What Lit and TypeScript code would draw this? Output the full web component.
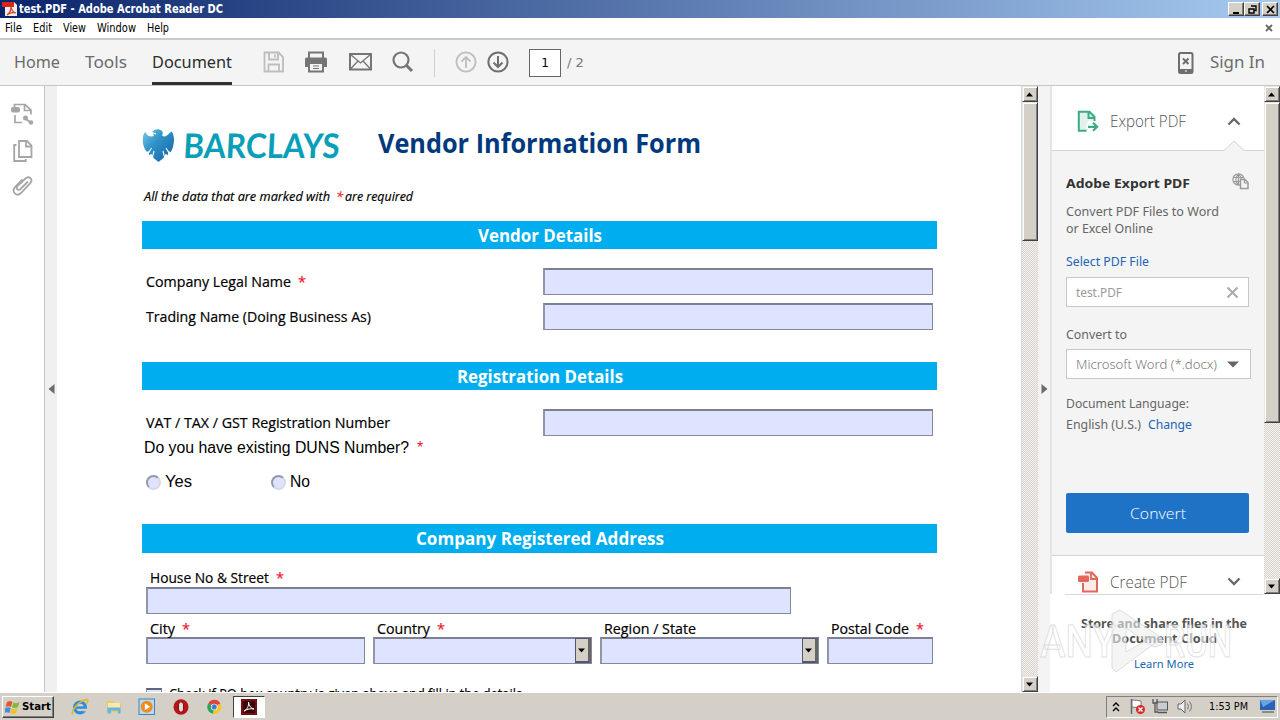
import { LitElement, html, css, svg, nothing } from "lit";
import { customElement, property } from "lit/decorators.js";

/** Text run stretched horizontally to a fixed advance width. */
@customElement("fit-text")
class FitText extends LitElement {
  @property({ type: Number }) w = 0;
  static styles = css`
    :host { display: inline-block; white-space: pre; flex: none; text-align: left; }
    .run { display: inline-block; transform-origin: 0 50%; }
  `;
  firstUpdated() {
    const run = this.renderRoot.querySelector(".run") as HTMLElement;
    const natural = run.getBoundingClientRect().width;
    this.style.width = `${this.w}px`;
    if (natural > 0) run.style.transform = `scaleX(${this.w / natural})`;
  }
  render() {
    return html`<span class="run"><slot></slot></span>`;
  }
}

@customElement("scroll-bar")
class ScrollBar extends LitElement {
  @property({ type: Number }) thumb = 100;
  static styles = css`
    :host { display: flex; flex-direction: column; width: 16px; flex: none;
      background: repeating-conic-gradient(#d8d3cc 0 25%, #f4f1ee 0 50%) 0 0 / 2px 2px; }
    .btn, .thumb { box-sizing: border-box; background: #d4d0c8; border: 1px solid; flex: none;
      border-color: #e8e6e0 #404040 #404040 #e8e6e0; box-shadow: inset 1px 1px #fff, inset -1px -1px #808080; }
    .btn { height: 16px; display: flex; align-items: center; justify-content: center; }
    .grow { flex: 1; }
  `;
  render() {
    return html`
      <div class="btn"><svg width="8" height="5"><path d="M0 4.500h7L3.500 .5z" fill="#000" /></svg></div>
      <div class="thumb" style="height:${this.thumb}px"></div>
      <div class="grow"></div>
      <div class="btn"><svg width="8" height="5"><path d="M0 .5h7L3.500 4.500z" fill="#000" /></svg></div>`;
  }
}

const ic = (w: number, h: number, body: unknown) =>
  html`<svg width=${w} height=${h} viewBox="0 0 ${w} ${h}" fill="none">${body}</svg>`;

const saveIcon = ic(22, 22, svg`<g stroke="#bdbdbd" stroke-width="1.800"><path d="M1.500 1.500h14l4.500 4.500v14.500h-18.500z"/><path d="M6 1.500v7h9v-7M5.500 20.500v-7h10.500v7"/><path d="M12 3.500v3"/></g>`);
const printIcon = ic(22, 22, svg`<path d="M4 7V1.500h14V7" stroke="#757575" stroke-width="2"/><path d="M1.500 6.500h19q1.500 0 1.500 1.500v8h-4v-4H4v4H0V8q0-1.500 1.500-1.500z" fill="#757575"/><path d="M4 12v8.500h14V12z" stroke="#757575" stroke-width="2" fill="#f4f4f4"/><path d="M8 15h6M8 17.500h6" stroke="#757575"/>`);
const mailIcon = ic(23, 18, svg`<g stroke="#757575"><path d="M1 1h21v15.500H1z" stroke-width="2"/><path d="M1.500 1.500l10 8.500 10-8.500M1.500 16l7.500-8M21.500 16l-7.500-8" stroke-width="1.300"/></g>`);
const findIcon = ic(22, 22, svg`<circle cx="9" cy="9" r="7.500" stroke="#757575" stroke-width="2.200"/><path d="M14.500 14.500l5.500 5.500" stroke="#757575" stroke-width="3"/>`);
const upIcon = ic(22, 22, svg`<g stroke="#c0c0c0" stroke-width="1.900"><circle cx="11" cy="11" r="9.600"/><path d="M11 17V6M6.500 10.500L11 6l4.500 4.500"/></g>`);
const downIcon = ic(22, 22, svg`<g stroke="#707070" stroke-width="2"><circle cx="11" cy="11" r="9.600"/><path d="M11 5v11M6.500 11.500L11 16l4.500-4.500"/></g>`);
const deviceIcon = ic(16, 22, svg`<rect x="1" y="1" width="13.500" height="20" rx="1.500" stroke="#6e6e6e" stroke-width="2"/><path d="M1 17h13.500v4H1z" fill="#6e6e6e"/><path d="M5 6.500l5.500 5.500M10.500 6.500L5 12" stroke="#6e6e6e" stroke-width="2"/><path d="M7 19h2" stroke="#fff"/>`);
const paneIcon = ic(24, 24, svg`<g stroke="#a6a6a6" stroke-width="1.700"><path d="M4 13v7.500h7M3.500 5V2.500H14l6 5.500v4.500M13.500 2.500V8.500h6"/></g><rect x="0" y="5" width="9" height="5.500" rx="2" fill="#a6a6a6"/><path d="M14 16l6 5" stroke="#a6a6a6" stroke-width="2"/><circle cx="14.500" cy="16" r="2.500" fill="#a6a6a6"/><circle cx="20" cy="20.500" r="2.200" fill="#a6a6a6"/>`);
const pagesIcon = ic(20, 24, svg`<g stroke="#a6a6a6" stroke-width="1.800"><path d="M6 2h8l4.500 4.500V18H6z"/><path d="M13 2v5.500h5.500M3.500 6H1.200v16h11.500v-2"/></g>`);
const clipIcon = ic(22, 24, svg`<path d="M16.500 7l-7.500 7.500c-2.500 2.500-5-.5-3-2.800L14 4c3.500-3.200 8 1 4.800 4.600L9.500 18.500c-4.500 4.200-10-1-6-6L11 4.800" stroke="#a6a6a6" stroke-width="1.800" transform="translate(-.5 -.5)"/>`);
const exportIcon = ic(22, 23, svg`<path d="M2 2h11l4 4.500v4L11 11l-2 6 2 3H2z" fill="#e3f1eb"/><path d="M17.500 11V7L12.500 1.800H1.800v19H9.500M11.500 2v6h6" stroke="#3dab83" stroke-width="2"/><path d="M11 16.800h8M16 12.800l4.200 4-4.200 4" stroke="#3dab83" stroke-width="2.200"/>`);
const createIcon = ic(21, 22, svg`<path d="M5 12v8.500h14V7l-5-5.500H7" stroke="#e2675b" stroke-width="2" fill="#fbecea"/><path d="M13 2v6h6" stroke="#e2675b" stroke-width="1.800"/><rect x="0" y="4.500" width="11" height="6.500" rx="1.500" fill="#e2675b"/>`);
const chevron = (d: string) => ic(14, 9, svg`<path d=${d} stroke="#6a6a6a" stroke-width="2.400"/>`);
const globeIcon = ic(17, 17, svg`<g stroke="#9a9a9a" stroke-width="1.200"><circle cx="6.500" cy="6.500" r="5.600"/><path d="M1 4.500h11M1 8.500h7M6.500 1v11M6.500 1C3 4 3 9 6.500 12M6.500 1C10 4 9 5 9 6"/><path d="M8.500 6.500h4.500l3 3v6H8.500z" fill="#f4f4f4" stroke-width="1.500"/><path d="M12.500 6.500V10H16"/></g>`);

const eagle = html`<svg class="eagle" width="34" height="36" viewBox="0 0 34 36">
  <defs><linearGradient id="eg" x1="0" y1="0" x2="1" y2="1"><stop offset="0" stop-color="#7cc9e6"/><stop offset=".4" stop-color="#2f93c8"/><stop offset="1" stop-color="#1560a6"/></linearGradient></defs>
  <path fill="url(#eg)" d="M10 4c2-3 7-4 10-1 1 1 1 3 0 5l3 .5c3-1 4-3.500 6.500-5 2 2 2.700 6 2.500 9-.3 5-1.500 9-3.500 12l-2-2-.5 4.500-2.500-1-2 4-5 4-5-4-2-4-2.500 1-.5-4.500L5 24C2 21 .5 16 .8 11c0-3 .5-5 2.500-7 1 3 4 4.500 6 4.500l2.500-.5-.5-2z"/>
  <g stroke="#fff" stroke-width="1.100" fill="none"><path d="M6.500 25l3-5M10.500 29l1.500-6M22.500 29l-1.500-6M27 25l-3-5M10 4.500l4 1.500"/></g></svg>`;

const winFlag = html`<svg width="16" height="16" viewBox="0 0 16 16"><path d="M2 3q3-2 5.500 0L6 8Q3.500 6.500.5 8z" fill="#e4572c"/><path d="M8.500 3.500q3 1.500 6-.5L13 8q-3 1.800-6 .3z" fill="#7dba38"/><path d="M.2 9q3-1.500 5.500 0L4.500 14q-2.500-1.500-5 0z" fill="#3f8fdc"/><path d="M6.700 9.400q3 1.500 6-.4L11.200 14q-3 1.800-6 .3z" fill="#f3c02c"/></svg>`;

const launchers = [
  html`<svg width="18" height="18" viewBox="0 0 18 18"><circle cx="9" cy="9.500" r="5.400" fill="none" stroke="#2d8fdb" stroke-width="3.200"/><path d="M5 9.600h9.500" stroke="#2d8fdb" stroke-width="2.400"/><path d="M11.500 10.800h6v2.400h-6z" fill="#d4d0c8"/><path d="M2 16.500C-1 13 9 2 16 1.500c2 .3 0 3.500-1 4.500" fill="none" stroke="#e3b42e" stroke-width="1.500"/></svg>`,
  html`<svg width="18" height="18" viewBox="0 0 18 18"><path d="M2 3h6l1 2h7v9H2z" fill="#ecc764"/><path d="M3 5h12v6H3z" fill="#f9e9a9"/><path d="M2.500 9.500h13v6h-2.500v-3H6v3H2.500z" fill="#63b5e5"/></svg>`,
  html`<svg width="18" height="18" viewBox="0 0 18 18"><rect x="1" y="1" width="15.500" height="15.500" fill="#b6dcf5" stroke="#3b86bd"/><circle cx="8.700" cy="8.700" r="6" fill="#f28a1c"/><path d="M6.800 5.300l5.400 3.400-5.400 3.500z" fill="#fff"/></svg>`,
  html`<svg width="18" height="18" viewBox="0 0 18 18"><ellipse cx="9" cy="9" rx="7.500" ry="7.800" fill="#b91519"/><ellipse cx="9" cy="9" rx="2.600" ry="5.200" fill="#e4dcd6" stroke="#7d0a0d"/></svg>`,
  html`<svg width="18" height="18" viewBox="0 0 18 18"><g transform="translate(1.300 1) scale(.88)"><path d="M9 9L2.200 5A7.800 7.800 0 0116 5.200z" fill="#e04436"/><path d="M9 9L2.200 5A7.800 7.800 0 008 16.800z" fill="#2fa556"/><path d="M9 9l7-3.800A7.800 7.800 0 018 16.800z" fill="#fbc52c"/><circle cx="9" cy="9" r="3.700" fill="#fff"/><circle cx="9" cy="9" r="2.900" fill="#3d7de0"/></g></svg>`,
];

const req = html`<b class="req">*</b>`;

@customElement("app-root")
class AppRoot extends LitElement {
  static styles = css`
    :host { display: flex; flex-direction: column; width: 1280px; height: 720px; overflow: hidden; position: relative;
      background: #fff; font-family: "Open Sans", sans-serif; color: #000; }
    * { box-sizing: border-box; }
    svg { display: block; flex: none; }

    .title { height: 18px; flex: none; display: flex; align-items: center; padding: 0 2px 0 2px;
      background: linear-gradient(90deg, #0a246a, #a6caf0); color: #fff; font: bold 11.500px/18px "DejaVu Sans", sans-serif; }
    .title .name { margin-left: 1px; }
    .wbtns { margin-left: auto; display: flex; }
    .wbtn { width: 16px; height: 14px; background: #d4d0c8; border: 1px solid; border-color: #fff #404040 #404040 #fff;
      box-shadow: inset -1px -1px #808080; display: flex; align-items: center; justify-content: center; }
    .wbtn.close { margin-left: 2px; }
    .menu { height: 20px; flex: none; display: flex; align-items: center; padding: 0 7px 0 5px; font: 11.500px/18px "DejaVu Sans", sans-serif; }
    .menu .x { margin-left: auto; }

    .tools { height: 48px; flex: none; display: flex; align-items: center; background: #f4f4f4; border-top: 2px solid #cacaca;
      border-bottom: 1px solid #c6c6c6; color: #6b6b6b; padding: 0 15px 0 14px; font: 16px/45px "Noto Sans", sans-serif; }
    .tab { height: 45px; margin-right: 25px; }
    .tab.on { color: #2c2c2c; border-bottom: 3px solid #333; margin-right: 31px; }
    .tools > svg { margin-bottom: 1px; }
    .sep { width: 1px; height: 28px; background: #cfcfcf; margin: 0 20px 0 20px; }
    .page { width: 32px; height: 28px; border: 1px solid #666; background: #fff; color: #000; font: 12px/26px "DejaVu Sans", sans-serif; text-align: center; margin: 0 6px 0 20px; }
    .total { font: 13px/44px "DejaVu Sans", sans-serif; color: #777; }
    .signin { margin-left: auto; display: flex; align-items: center; gap: 16px; }

    .main { flex: 1; min-height: 0; display: flex; }
    .rail { width: 45px; border-right: 1px solid #c4c4c4; display: flex; flex-direction: column; align-items: center; padding: 16px 0 0 1px; gap: 12.500px; }
    .fold { width: 12px; background: #f0f0f0; display: flex; align-items: center; justify-content: center; }
    .fold.r { width: 12px; background: #f4f4f4; }

    .doc { width: 965px; flex: none; padding: 0 84px 0 85px; overflow: hidden; display: flex; flex-direction: column; border-right: 1px solid #cfdde2; }
    .doc > * { flex: none; }
    .head { height: 98px; display: flex; padding-top: 41px; color: #003a7d; font: bold 26px/32px "Open Sans", sans-serif; }
    .eagle { margin-top: 1px; }
    .brand { margin: 0 37px 0 7px; font: bold 34px/36px Lato, sans-serif; color: #0a9fb9; transform: skewX(-3deg); }
    .note { height: 37px; padding-left: 2px; font: italic 500 13px/25px "Open Sans", sans-serif; -webkit-text-stroke: .2px; display: flex; }
    .req { color: #f0142c; font-weight: 400; margin-left: 7px; }
    .note .req { margin: 0 2px 0 6px; }
    .bar { height: 28px; background: #00aeef; color: #fff; display: flex; justify-content: center; font: bold 17.500px/29px "Open Sans", sans-serif; }
    .row { display: flex; justify-content: space-between; align-items: center; height: 27px; padding: 0 4px; margin-bottom: 8px; }
    .lbl { display: flex; font: 500 14.500px/22px "Open Sans", sans-serif; -webkit-text-stroke: .2px; }
    .field { height: 27px; background: #dee3ff; border: 1px solid #85889b; border-top: 2px solid #7d8093; border-left: 2px solid #9295a6; width: 390px; flex: none; display: flex; justify-content: flex-end; }
    .g1 { margin: 19px 0 24px; }
    .g2 { margin: 19px 0 0; height: 115px; }
    .g2 .row { margin-bottom: 1px; }
    .arial { font: 16px/22px "Liberation Sans", sans-serif; padding-left: 2px; display: flex; }
    .arial .req { margin-left: 8px; }
    .radios { display: flex; margin-top: 12px; padding-left: 4px; }
    .radios > label { width: 125px; display: flex; align-items: center; gap: 4px; font: 16px/22px "Liberation Sans", sans-serif; }
    .dot { width: 15px; height: 15px; border-radius: 50%; background: #dee3ff; border: 2px solid; border-color: #9497a8 #d8d8e4 #d8d8e4 #9497a8; }
    .addr { padding-left: 4px; }
    .bar.last { height: 29px; }
    .addr .lbl { height: 24px; padding-left: 4px; line-height: 30px; }
    .street { margin-top: 10px; }
    .cols { display: flex; gap: 8px; }
    .cols .c .lbl { height: 23px; line-height: 30px; }
    .drop { width: 16px; height: 25px; margin-top: -1px; background: #d4d0c8; border: 1px solid #fff; border-color: #55586a; border-right: 3px solid #666; border-bottom-width: 2px; display: flex; align-items: center; justify-content: center; }
    .check { display: flex; margin-top: 24px; gap: 7px; }
    .check .box { width: 16px; height: 16px; border: 1px solid #85889b; border-top: 2px solid #62667c; background: #dee3ff; }
    .check .lbl { padding: 0; margin-top: -5px; line-height: 22px; }

    .side { width: 214px; flex: none; display: flex; flex-direction: column; color: #666; border-left: 2px solid #e4e4e4; }
    .wrap { display: flex; flex-direction: column; flex: none; width: 230px; }
    .upper { display: flex; height: 508px; }
    .acc { display: flex; align-items: center; height: 65px; border-bottom: 1px solid #d4d4d4; padding: 6px 23px 0 25px; font: 300 15.500px/24px "Open Sans", sans-serif; color: #555; position: relative; flex: none; }
    .acc fit-text { margin: 0 auto 0 11px; }
    .notch { position: absolute; right: 19px; bottom: -2px; }
    .body { background: #f4f4f4; flex: 1; padding: 20px 14px 0 14px; font: 12px/17px "Noto Sans", sans-serif; display: flex; flex-direction: column; }
    .body > * { flex: none; }
    .hd { display: flex; justify-content: space-between; font-weight: 700; font-size: 13px; line-height: 24px; color: #333; height: 32px; }
    .hd svg { margin: 2px 1px 0 0; }
    .link { color: #1c64b4; }
    .inp { height: 30px; width: 183px; border: 1px solid #c8c8c8; background: #fff; color: #9a9a9a; display: flex; align-items: center; justify-content: space-between; padding: 0 9px; }
    .inp.sel { width: 185px; padding-right: 11px; font-size: 13px; font-weight: 300; color: #777; }
    .inp.sel fit-text { line-height: 19px; padding-top: 1px; }
    .cvt { height: 40px; width: 183px; background: #1f73c7; border-radius: 2px; color: #fff; font: 300 15px/40px "Open Sans", sans-serif; text-align: center; }
    .acc.low { height: 39px; border-top: 1px solid #d4d4d4; padding: 13px 23px 0 26px; border-bottom: 0; }
    .promo { border-top: 1px solid #d8d8d8; margin: 0 17px 0 15px; padding-top: 21px; text-align: center; font: bold 11.500px/15px "Noto Sans", sans-serif; color: #555; display: flex; flex-direction: column; align-items: center; }
    .promo .link { font-weight: 400; margin-top: 10px; }
    .mark { position: absolute; left: 1038px; top: 606px; }

    .task { height: 28px; flex: none; background: #d4d0c8; border-top: 1px solid #fff; display: flex; align-items: center; padding: 0 2px 0 2px; font: 11px/20px "DejaVu Sans", sans-serif; }
    .start { width: 52px; height: 22px; display: flex; align-items: center; gap: 1px; padding-left: 2px; font-weight: bold; border: 1px solid; border-color: #fff #404040 #404040 #fff; box-shadow: inset -1px -1px #808080; }
    .launch { display: flex; gap: 15.500px; margin-left: 17px; }
    .active { width: 32px; height: 22px; margin-left: 10px; background: #fff; border: 1px solid; border-color: #404040 #fff #fff #404040; display: flex; align-items: center; justify-content: center; }
    .tray { margin-left: auto; height: 22px; width: 172px; border: 1px solid; border-color: #808080 #fff #fff #808080; display: flex; align-items: center; padding: 0 2px 0 5px; }
  `;

  label(text: string, w: number, star = false) {
    return html`<div class="lbl"><fit-text .w=${w}>${text}</fit-text>${star ? req : nothing}</div>`;
  }

  column(text: string, w: number, star: boolean, width: number, drop = false) {
    return html`<div class="c">${this.label(text, w, star)}
      <div class="field" style="width:${width}px">${drop
        ? html`<div class="drop"><svg width="8" height="5"><path d="M0 .5h7L3.500 4.500z" fill="#000"/></svg></div>` : nothing}</div></div>`;
  }

  render() {
    return html`
      <div class="title">
        <svg width="16" height="16" viewBox="0 0 16 16"><path d="M3 1h9l3 3v11H3z" fill="#f3eeee"/><path d="M0 1h12v5H0z" fill="#d8261c"/><path d="M5 14c3-2 4-5 4-8 1 4 2 5 5 6-3-1-6-.5-9 2z" fill="none" stroke="#d8482c" stroke-width="1.300"/></svg>
        <fit-text class="name" .w=${204}>test.PDF - Adobe Acrobat Reader DC</fit-text>
        <div class="wbtns">
          <div class="wbtn"><svg width="9" height="9"><path d="M1 8h6" stroke="#000" stroke-width="2"/></svg></div>
          <div class="wbtn"><svg width="9" height="9"><path d="M3 1h5v4.500H6.500M1 4h5v4H1z" fill="none" stroke="#000" stroke-width="1.400"/></svg></div>
          <div class="wbtn close"><svg width="9" height="9"><path d="M1 1l7 7M8 1L1 8" stroke="#000" stroke-width="1.700"/></svg></div>
        </div>
      </div>
      <div class="menu">
        <fit-text .w=${17}>File</fit-text><fit-text style="margin-left:11px" .w=${19}>Edit</fit-text><fit-text style="margin-left:11px" .w=${23}>View</fit-text><fit-text style="margin-left:11px" .w=${39}>Window</fit-text><fit-text style="margin-left:11px" .w=${22}>Help</fit-text>
        <svg class="x" width="8" height="8"><path d="M1 1l6 6M7 1L1 7" stroke="#666" stroke-width="1.800"/></svg>
      </div>
      <div class="tools">
        <div class="tab"><fit-text .w=${46}>Home</fit-text></div>
        <div class="tab"><fit-text .w=${42}>Tools</fit-text></div>
        <div class="tab on"><fit-text .w=${80}>Document</fit-text></div>
        ${saveIcon}<span style="width:20px"></span>${printIcon}<span style="width:22px"></span>${mailIcon}<span style="width:20px"></span>${findIcon}
        <div class="sep"></div>${upIcon}<span style="width:10px"></span>${downIcon}
        <div class="page">1</div><fit-text class="total" .w=${17}>/ 2</fit-text>
        <div class="signin">${deviceIcon}<fit-text .w=${55}>Sign In</fit-text></div>
      </div>
      <div class="main">
        <div class="rail">${paneIcon}${pagesIcon}${clipIcon}</div>
        <div class="fold"><svg width="7" height="10"><path d="M6.500 0v10L.5 5z" fill="#6b6b6b"/></svg></div>
        <div class="doc">
          <div class="head">${eagle}<fit-text class="brand" .w=${158}>BARCLAYS</fit-text><fit-text .w=${323}>Vendor Information Form</fit-text></div>
          <div class="note"><fit-text .w=${186}>All the data that are marked with</fit-text><b class="req">*</b><fit-text .w=${68}>are required</fit-text></div>
          <div class="bar"><fit-text .w=${124}>Vendor Details</fit-text></div>
          <div class="g1">
            <div class="row">${this.label("Company Legal Name", 145, true)}<div class="field"></div></div>
            <div class="row">${this.label("Trading Name (Doing Business As)", 225)}<div class="field"></div></div>
          </div>
          <div class="bar"><fit-text .w=${166}>Registration Details</fit-text></div>
          <div class="g2">
            <div class="row">${this.label("VAT / TAX / GST Registration Number", 244)}<div class="field"></div></div>
            <div class="arial"><fit-text .w=${265}>Do you have existing DUNS Number?</fit-text><b class="req">*</b></div>
            <div class="radios"><label><span class="dot"></span><fit-text .w=${27}>Yes</fit-text></label><label><span class="dot"></span><fit-text .w=${20}>No</fit-text></label></div>
          </div>
          <div class="bar last"><fit-text .w=${248}>Company Registered Address</fit-text></div>
          <div class="addr">
            <div class="street">${this.label("House No & Street", 119, true)}<div class="field" style="width:645px"></div></div>
            <div class="cols">
              ${this.column("City", 25, true, 219)}${this.column("Country", 53, true, 219, true)}${this.column("Region / State", 92, false, 219, true)}${this.column("Postal Code", 78, true, 106)}
            </div>
            <div class="check"><span class="box"></span>${this.label("Check if PO box country is given above and fill in the details", 353)}</div>
          </div>
        </div>
        <scroll-bar .thumb=${139}></scroll-bar>
        <div class="fold r"><svg width="7" height="10"><path d="M.5 0v10l6-5z" fill="#6b6b6b"/></svg></div>
        <div class="wrap">
          <div class="upper">
            <div class="side">
              <div class="acc">${exportIcon}<fit-text .w=${76}>Export PDF</fit-text>${chevron("M1.500 7.500L7 2l5.500 5.500")}
                <svg class="notch" width="22" height="12"><path d="M0 11L11 1l11 10v1H0z" fill="#f4f4f4"/><path d="M0 10.500h1L11 1l10 9.500h1" fill="none" stroke="#d4d4d4"/></svg></div>
              <div class="body">
                <div class="hd"><fit-text .w=${124}>Adobe Export PDF</fit-text>${globeIcon}</div>
                <fit-text .w=${153}>Convert PDF Files to Word</fit-text>
                <fit-text .w=${87}>or Excel Online</fit-text>
                <fit-text class="link" style="margin-top:16px" .w=${83}>Select PDF File</fit-text>
                <div class="inp" style="margin-top:7px"><fit-text .w=${46}>test.PDF</fit-text><svg width="13" height="13"><path d="M1.500 1.500l10 10M11.500 1.500l-10 10" stroke="#aaa" stroke-width="2"/></svg></div>
                <fit-text style="margin-top:19px" .w=${61}>Convert to</fit-text>
                <div class="inp sel" style="margin-top:6px"><fit-text .w=${141}>Microsoft Word (*.docx)</fit-text><svg width="12" height="7"><path d="M0 .5h12L6 6.500z" fill="#666"/></svg></div>
                <fit-text style="margin-top:16px" .w=${123}>Document Language:</fit-text>
                <div style="margin-top:4px"><fit-text .w=${75}>English (U.S.)</fit-text><fit-text class="link" style="margin-left:7px" .w=${44}>Change</fit-text></div>
                <div class="cvt" style="margin-top:60px"><fit-text .w=${56}>Convert</fit-text></div>
              </div>
              <div class="acc low">${createIcon}<fit-text .w=${77}>Create PDF</fit-text>${chevron("M1.500 1.500L7 7l5.500-5.500")}</div>
            </div>
            <scroll-bar .thumb=${321}></scroll-bar>
          </div>
          <div class="promo"><fit-text .w=${166}>Store and share files in the</fit-text><fit-text .w=${105}>Document Cloud</fit-text><fit-text class="link" .w=${60}>Learn More</fit-text></div>
        </div>
      </div>
      <svg class="mark" width="200" height="70" viewBox="0 0 200 70">
        <g fill="#fff" fill-opacity=".6" stroke="#d2d2d2" stroke-opacity=".7" stroke-width="1" font-family="Roboto, sans-serif" font-size="45" font-weight="500">
          <text x="2" y="51" textLength="76" lengthAdjust="spacingAndGlyphs">ANY</text>
          <text x="126" y="51" textLength="68" lengthAdjust="spacingAndGlyphs">RUN</text>
          <path d="M74 8l8-4 42 28v7l-8 2-28-19v24l28-16 4 5-42 31-4-4z" fill="#eee" />
        </g>
      </svg>
      <div class="task">
        <div class="start">${winFlag}<fit-text .w=${29}>Start</fit-text></div>
        <div class="launch">${launchers}</div>
        <div class="active"><svg width="16" height="16" viewBox="0 0 16 16"><rect width="16" height="16" fill="#3a0708"/><rect x="1" y="1" width="14" height="14" fill="none" stroke="#b01818"/><path d="M3 12c3-1 5-5 4.500-9C8 7 10 9.500 13 10c-3-.7-7 0-10 2z" fill="none" stroke="#fff"/></svg></div>
        <div class="tray">
          <svg width="8" height="10"><path d="M1 4l3-3 3 3M1 9l3-3 3 3" fill="none" stroke="#000" stroke-width="1.400"/></svg>
          <svg style="margin-left:9px" width="17" height="17"><path d="M2.500 1v15" stroke="#666" stroke-width="1.500"/><path d="M3 2q4 0 9 1v7l-9-1z" fill="#fff" stroke="#777"/><circle cx="11.500" cy="11.500" r="4.500" fill="#d42a2a"/><path d="M9.500 9.500l4 4M13.500 9.500l-4 4" stroke="#fff" stroke-width="1.400"/></svg>
          <svg style="margin-left:6px" width="17" height="17"><rect x="5" y="4" width="10.500" height="8" fill="#c7cdd2" stroke="#555"/><path d="M6 14.500h9" stroke="#555" stroke-width="1.500"/><path d="M1 1v4h4V1M3 5v9h3" fill="none" stroke="#555" stroke-width="1.300"/></svg>
          <svg style="margin-left:8px" width="17" height="17"><path d="M1 6h3l4-4v13l-4-4H1z" fill="#eee" stroke="#666"/><path d="M10.500 5.500q2 3 0 6M12.500 3.500q4 5 0 10" fill="none" stroke="#777"/></svg>
          <fit-text style="margin-left:15px" .w=${39}>1:53 PM</fit-text>
          <svg style="margin-left:auto" width="15" height="13"><path d="M0 0h15v10H0z" fill="#2a63b4"/><path d="M0 0h15L3 7z" fill="#68a3e2"/><path d="M2 12h12" stroke="#444"/></svg>
        </div>
      </div>`;
  }
}
